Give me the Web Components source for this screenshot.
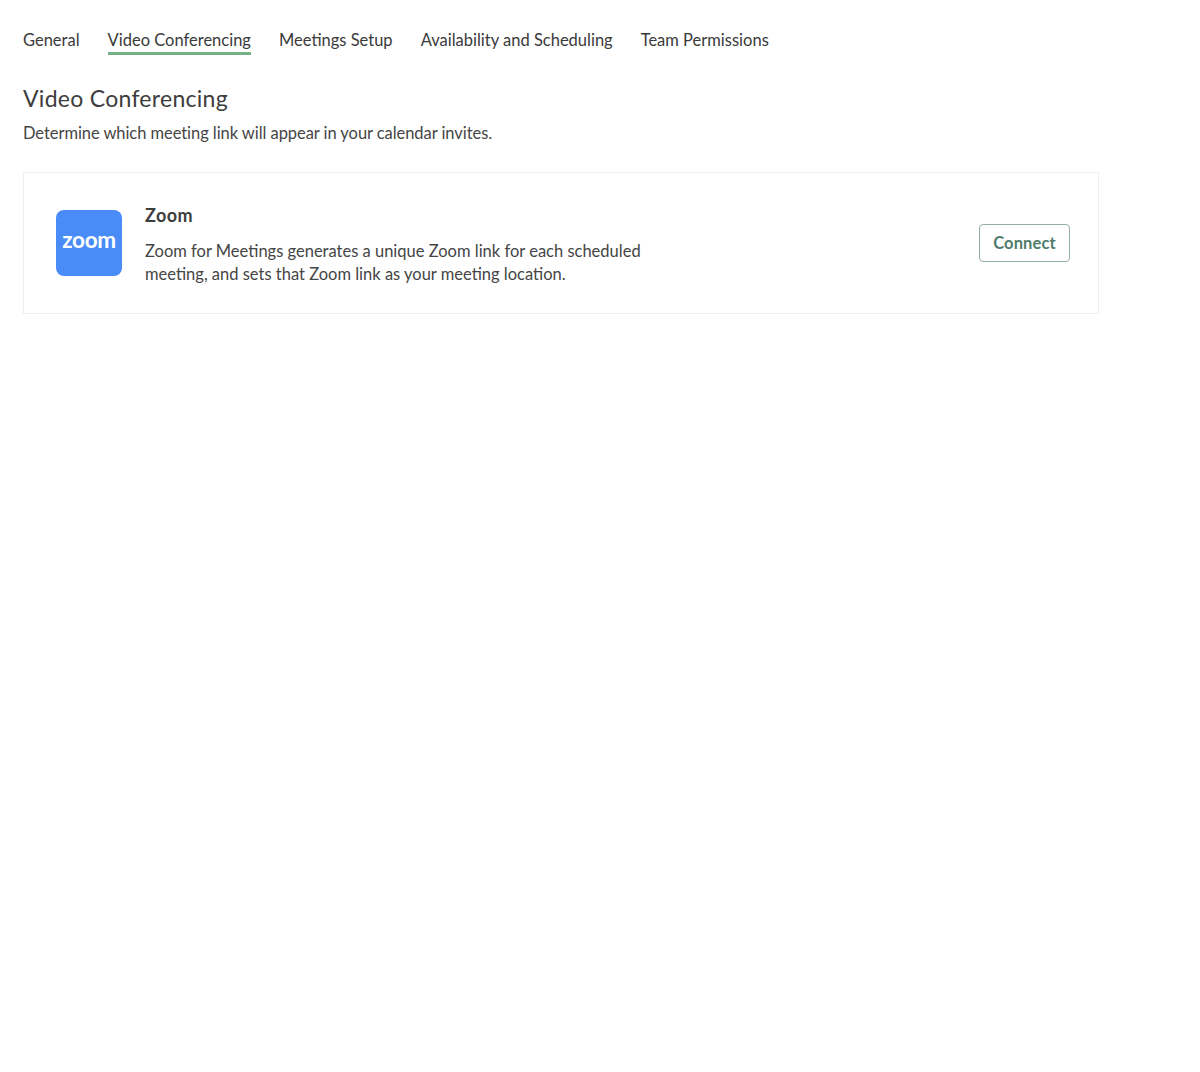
<!DOCTYPE html>
<html>
<head>
<meta charset="utf-8">
<title>Video Conferencing</title>
<style>
    html, body { margin: 0; padding: 0; background: #fff; }
    body { font-family: "Lato", "Liberation Sans", sans-serif; color: #3d3d3d; }
</style>
</head>
<body>
<settings-page>
    <settings-tabs></settings-tabs>
    <section-header heading="Video Conferencing" text="Determine which meeting link will appear in your calendar invites."></section-header>
    <integration-card name="Zoom">
        Zoom for Meetings generates a unique Zoom link for each scheduled meeting, and sets that Zoom link as your meeting location.
    </integration-card>
</settings-page>

<script>
class SettingsPage extends HTMLElement {
    constructor() {
        super();
        this.attachShadow({ mode: 'open' });
        this.shadowRoot.innerHTML = `
        <style>
        :host {
            display: block;
            width: 1076px;
            padding: 0 0 0 23px;
            box-sizing: content-box;
            min-height: 1072px;
        }
        </style>
        <slot></slot>
        `;
    }
}

class SettingsTabs extends HTMLElement {
    constructor() {
        super();
        this.attachShadow({ mode: 'open' });
    }

    connectedCallback() {
        const tabs = ['General', 'Video Conferencing', 'Meetings Setup', 'Availability and Scheduling', 'Team Permissions'];
        this.shadowRoot.innerHTML = `
        <style>
        :host {
            display: flex;
            gap: 28px;
            padding-top: 29px;
        }
        a {
            display: block;
            height: 23px;
            line-height: 23px;
            font-size: 16.5px;
            letter-spacing: 0;
            color: #3a3a3a;
            border-bottom: 3px solid transparent;
            white-space: nowrap;
        }
        a.active { border-bottom-color: #73b287; }
        </style>
        ${tabs.map((t, i) => `<a class="${i === 1 ? 'active' : ''}">${t}</a>`).join('')}
        `;
    }
}

class SectionHeader extends HTMLElement {
    constructor() {
        super();
        this.attachShadow({ mode: 'open' });
    }

    connectedCallback() {
        this.shadowRoot.innerHTML = `
        <style>
        :host { display: block; padding-top: 27px; }
        h2 {
            margin: 0;
            font-size: 23px;
            line-height: 32px;
            font-weight: 400;
            letter-spacing: 0.28px;
            color: #3d3d3d;
        }
        p {
            margin: 8px 0 0;
            font-size: 16.5px;
            line-height: 22px;
            letter-spacing: -0.06px;
            color: #454545;
        }
        </style>
        <h2>${this.getAttribute('heading')}</h2>
        <p>${this.getAttribute('text')}</p>
        `;
    }
}

class ZoomLogo extends HTMLElement {
    constructor() {
        super();
        this.attachShadow({ mode: 'open' });
        this.shadowRoot.innerHTML = `
        <style>
        :host {
            display: flex;
            align-items: center;
            justify-content: center;
            flex: none;
            width: 66px;
            height: 66px;
            border-radius: 8px;
            background: #4a8cf7;
        }
        span {
            font-family: "Lato", sans-serif;
            font-size: 22.5px;
            font-weight: 700;
            letter-spacing: -0.3px;
            line-height: 1;
            color: #fff;
            position: relative;
            top: -3px;
        }
        </style>
        <span>zoom</span>
        `;
    }
}

class IntegrationCard extends HTMLElement {
    constructor() {
        super();
        this.attachShadow({ mode: 'open' });
    }

    connectedCallback() {
        this.shadowRoot.innerHTML = `
        <style>
        :host {
            display: flex;
            align-items: center;
            box-sizing: border-box;
            width: 1076px;
            height: 142px;
            margin-top: 28px;
            padding: 0 28px 0 32px;
            border: 1px solid #efefef;
        }
        .body {
            flex: 1;
            margin-left: 23px;
            padding-top: 2px;
        }
        h3 {
            margin: 0 0 13px;
            font-size: 18px;
            line-height: 24px;
            font-weight: 700;
            letter-spacing: 0.4px;
            color: #3d3d3d;
        }
        p {
            margin: 0;
            width: 510px;
            font-size: 16.5px;
            line-height: 23px;
            letter-spacing: 0;
            color: #454545;
        }
        button {
            flex: none;
            width: 91px;
            height: 38px;
            padding: 0;
            background: #fff;
            border: 1px solid #93b0a5;
            border-radius: 4px;
            font: 700 16.5px "Lato", sans-serif;
            letter-spacing: 0.1px;
            color: #4f7c6c;
        }
        </style>
        <zoom-logo></zoom-logo>
        <div class="body">
            <h3>${this.getAttribute('name')}</h3>
            <p><slot></slot></p>
        </div>
        <button>Connect</button>
        `;
    }
}

customElements.define('settings-page', SettingsPage);
customElements.define('settings-tabs', SettingsTabs);
customElements.define('section-header', SectionHeader);
customElements.define('zoom-logo', ZoomLogo);
customElements.define('integration-card', IntegrationCard);
</script>
</body>
</html>
